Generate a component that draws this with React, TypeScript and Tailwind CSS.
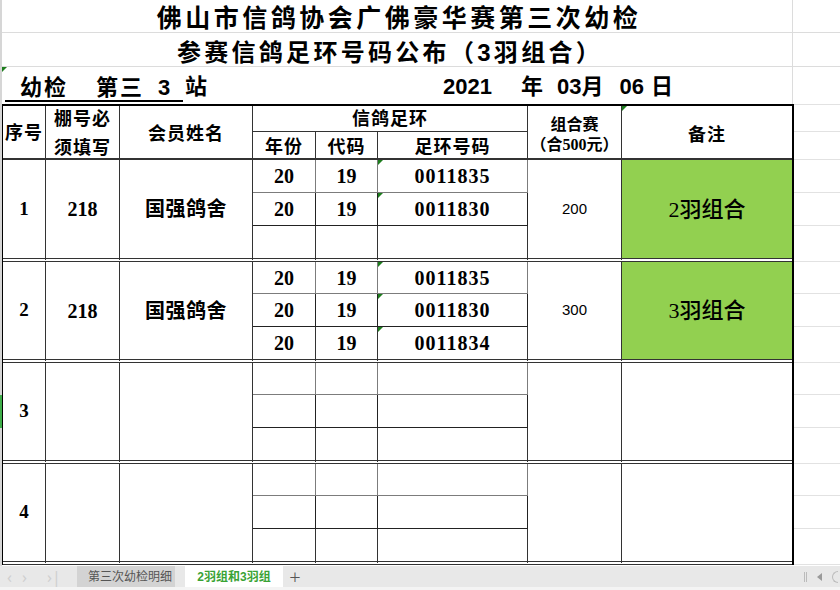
import React from "react";

const SANS = "font-['Liberation_Sans','Noto_Sans_CJK_SC',sans-serif]";
const SERIF = "font-['Liberation_Serif','Noto_Sans_CJK_SC',serif]";

type Group = {
  no: string;
  shed: string;
  name: string;
  rings: string[][];
  fee: string;
  note: string;
};

const groups: Group[] = [
  {
    no: "1",
    shed: "218",
    name: "国强鸽舍",
    rings: [
      ["20", "19", "0011835"],
      ["20", "19", "0011830"],
      ["", "", ""],
    ],
    fee: "200",
    note: "2羽组合",
  },
  {
    no: "2",
    shed: "218",
    name: "国强鸽舍",
    rings: [
      ["20", "19", "0011835"],
      ["20", "19", "0011830"],
      ["20", "19", "0011834"],
    ],
    fee: "300",
    note: "3羽组合",
  },
  { no: "3", shed: "", name: "", rings: [["", "", ""], ["", "", ""], ["", "", ""]], fee: "", note: "" },
  { no: "4", shed: "", name: "", rings: [["", "", ""], ["", "", ""], ["", "", ""]], fee: "", note: "" },
];

const rowStart = [
  "row-start-3",
  "row-start-4",
  "row-start-5",
  "row-start-6",
  "row-start-7",
  "row-start-8",
  "row-start-9",
  "row-start-10",
  "row-start-11",
  "row-start-12",
  "row-start-13",
  "row-start-14",
];

function Tri() {
  return (
    <div className="absolute left-0 top-0 h-0 w-0 border-t-[5px] border-r-[5px] border-t-[#1d7d1d] border-r-transparent" />
  );
}

function Cell({ cls, children }: { cls: string; children?: React.ReactNode }) {
  return <div className={`relative flex items-center justify-center ${cls}`}>{children}</div>;
}

export default function App() {
  return (
    <div className="flex h-[590px] w-[840px] flex-col overflow-hidden bg-white text-black">
      <div className="flex h-[566px]">
        {/* row header gutter */}
        <div className="flex w-[2px] flex-col bg-[#d6d6d6]">
          <div className="h-[395px]" />
          <div className="h-[33px] bg-[#3fae4a]" />
        </div>
        <div className="flex w-[838px] flex-col">
          {/* title 1 */}
          <div className="flex h-[33px] border-b border-[#dcdcdc]">
            <div className={`flex w-[791px] items-end justify-center border-r border-[#dcdcdc] pb-[1px] pl-[4px] text-[25px] font-bold leading-none tracking-[3.5px] ${SANS}`}>
              佛山市信鸽协会广佛豪华赛第三次幼检
            </div>
            <div className="flex-1" />
          </div>
          {/* title 2 */}
          <div className="flex h-[34px] border-b border-[#dcdcdc]">
            <div className={`flex w-[791px] items-end justify-center border-r border-[#dcdcdc] pb-[1px] pr-[14px] text-[24px] font-bold leading-none tracking-[3.3px] ${SANS}`}>
              参赛信鸽足环号码公布（3羽组合）
            </div>
            <div className="flex-1" />
          </div>
          {/* title 3 */}
          <div className="relative flex h-[37px]">
            <Tri />
            <div className={`flex w-[791px] items-center border-r border-[#dcdcdc] pl-[3px] pt-[5px] text-[22px] font-bold leading-none ${SANS}`}>
              <span className="-mt-[2px] flex h-[29px] w-[178px] items-center border-b-2 border-black">
                <span className="ml-[15px] mt-[3px] tracking-[2px]">幼检</span>
                <span className="ml-[28px] mt-[3px] tracking-[2px]">第三</span>
                <span className="ml-[14px] mt-[3px]">3</span>
              </span>
              <span className="-mt-[2px] ml-[2px]">站</span>
              <span className="-mt-[2px] ml-[236px]">2021</span>
              <span className="-mt-[2px] ml-[29px]">年</span>
              <span className="-mt-[2px] ml-[14px]">03月</span>
              <span className="-mt-[2px] ml-[16px]">06</span>
              <span className="-mt-[2px] ml-[7px]">日</span>
            </div>
            <div className="flex-1" />
          </div>

          {/* table + filler */}
          <div className="flex">
            <div
              className={`grid w-[792px] grid-cols-[43px_74px_133px_63px_62px_150px_94px_170px] grid-rows-[26px_28px_33px_33px_36px_32px_33px_36px_32px_33px_36px_32px_33px_36px] border-t-2 border-r-2 border-l border-black ${SERIF}`}
            >
              {/* header */}
              <Cell cls="col-start-1 row-start-1 row-span-2 border-r border-b-2 border-[#333] pt-[3px] text-[18px] font-bold tracking-[1px]">序号</Cell>
              <Cell cls="col-start-2 row-start-1 row-span-2 border-r border-b-2 border-[#333] pt-[3px] text-[18px] font-bold leading-[29px] tracking-[1px]">
                <div className="text-center">
                  棚号必
                  <br />
                  须填写
                </div>
              </Cell>
              <Cell cls="col-start-3 row-start-1 row-span-2 border-r border-b-2 border-[#333] pt-[4px] text-[18px] font-bold tracking-[1px]">会员姓名</Cell>
              <Cell cls="col-start-4 col-span-3 row-start-1 border-r border-b border-[#333] pt-[1px] text-[18px] font-bold tracking-[1px]">信鸽足环</Cell>
              <Cell cls="col-start-4 row-start-2 border-r border-b-2 border-[#333] pt-[5px] text-[18px] font-bold tracking-[1px]">年份</Cell>
              <Cell cls="col-start-5 row-start-2 border-r border-b-2 border-[#333] pt-[5px] text-[18px] font-bold tracking-[1px]">代码</Cell>
              <Cell cls="col-start-6 row-start-2 border-r border-b-2 border-[#333] pt-[5px] text-[18px] font-bold tracking-[1px]">足环号码</Cell>
              <Cell cls="col-start-7 row-start-1 row-span-2 border-r border-b-2 border-[#333] pt-[5px] text-[16px] font-bold leading-[20px]">
                <div className="text-center">
                  组合赛
                  <br />
                  <span className="-mx-[6px]">（合500元）</span>
                </div>
              </Cell>
              <Cell cls="col-start-8 row-start-1 row-span-2 border-b-2 border-[#333] pt-[6px] text-[18px] font-bold tracking-[1px]">
                <Tri />
                备注
              </Cell>

              {groups.map((g, gi) => {
                const rs = rowStart[gi * 3];
                return (
                  <React.Fragment key={gi}>
                    <Cell cls={`col-start-1 row-span-3 ${rs} border-r border-b-4 border-double border-[#333] text-[19px] font-bold`}>{g.no}</Cell>
                    <Cell cls={`col-start-2 row-span-3 ${rs} border-r border-b-4 border-double border-[#333] text-[20px] font-bold`}>{g.shed}</Cell>
                    <Cell cls={`col-start-3 row-span-3 ${rs} border-r border-b-4 border-double border-[#333] text-[20px] font-bold tracking-[0.5px]`}>{g.name}</Cell>
                    {g.rings.map((r, ri) => {
                      const rr = rowStart[gi * 3 + ri];
                      const b =
                        ri === 0
                          ? "border-b border-[#7c7c7c]"
                          : ri === 1
                          ? "border-b border-[#222]"
                          : "border-b-4 border-double border-[#333]";
                      return (
                        <React.Fragment key={ri}>
                          <Cell cls={`col-start-4 ${rr} border-r ${b} text-[20px] font-bold`}>{r[0]}</Cell>
                          <Cell cls={`col-start-5 ${rr} border-r ${b} text-[20px] font-bold`}>{r[1]}</Cell>
                          <Cell cls={`col-start-6 ${rr} border-r ${b} text-[20px] font-bold tracking-[1px]`}>
                            {r[2] && <Tri />}
                            {r[2]}
                          </Cell>
                        </React.Fragment>
                      );
                    })}
                    <Cell cls={`col-start-7 row-span-3 ${rs} border-r border-b-4 border-double border-[#333] text-[15px] ${SANS}`}>{g.fee}</Cell>
                    <Cell
                      cls={`col-start-8 row-span-3 ${rs} border-b-4 border-double border-[#333] bg-clip-padding text-[22px] font-medium ${
                        g.note ? "bg-[#92d050]" : ""
                      }`}
                    >
                      {g.note}
                    </Cell>
                  </React.Fragment>
                );
              })}
            </div>
            {/* filler with light gridlines */}
            <div className="flex flex-1 flex-col border-t border-[#e2e2e2]">
              <div className="h-[27px] border-b border-[#e2e2e2]" />
              <div className="h-[28px] border-b border-[#e2e2e2]" />
              <div className="h-[33px] border-b border-[#e2e2e2]" />
              <div className="h-[33px] border-b border-[#e2e2e2]" />
              <div className="h-[36px] border-b border-[#e2e2e2]" />
              <div className="h-[32px] border-b border-[#e2e2e2]" />
              <div className="h-[33px] border-b border-[#e2e2e2]" />
              <div className="h-[36px] border-b border-[#e2e2e2]" />
              <div className="h-[32px] border-b border-[#e2e2e2]" />
              <div className="h-[33px] border-b border-[#e2e2e2]" />
              <div className="h-[36px] border-b border-[#e2e2e2]" />
              <div className="h-[32px] border-b border-[#e2e2e2]" />
              <div className="h-[33px] border-b border-[#e2e2e2]" />
              <div className="h-[36px] border-b border-[#e2e2e2]" />
            </div>
          </div>
        </div>
      </div>

      {/* sheet tab bar */}
      <div className="flex h-[21px] items-stretch bg-[#e8e8e8] text-[12px]">
        <div className="flex w-[77px] items-center gap-[10px] pl-[7px] text-[16px] leading-none text-[#cfcfcf]">
          <span>‹</span>
          <span>›</span>
          <span className="ml-[10px]">›|</span>
        </div>
        <div className={`flex w-[98px] items-center justify-end bg-[#d3d3d3] pr-[3px] text-[#555] ${SANS}`}>第三次幼检明细</div>
        <div className="w-[10px]" />
        <div className={`flex w-[98px] items-center justify-center bg-white font-bold text-[#3aa335] ${SANS}`}>2羽组和3羽组</div>
        <div className="flex w-[24px] items-center justify-center text-[20px] font-light leading-none text-[#555]">+</div>
        <div className="flex-1" />
        <div className="flex items-center gap-[10px] pr-[2px]">
          <span className="h-[10px] w-[3px] border-x border-[#bbb]" />
          <span className="h-0 w-0 border-y-[4px] border-r-[5px] border-y-transparent border-r-[#9a9a9a]" />
          <span className="h-[12px] w-[6px] rounded-l-full border border-r-0 border-[#bbb]" />
        </div>
      </div>
      <div className="h-[3px] bg-[#f4f4f4]" />
    </div>
  );
}
